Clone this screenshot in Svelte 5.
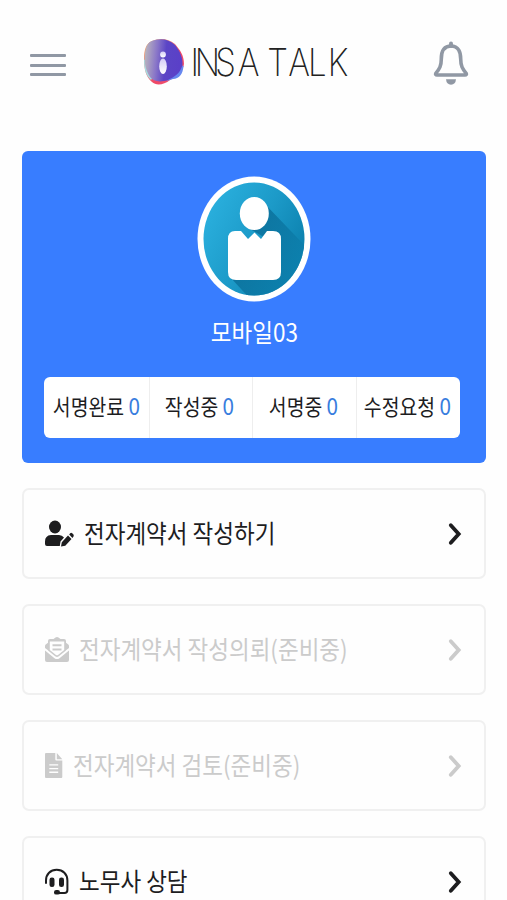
<script>
  const stats = [
    { label: '서명완료', count: 0 },
    { label: '작성중', count: 0 },
    { label: '서명중', count: 0 },
    { label: '수정요청', count: 0 }
  ]

  const menu = [
    { icon: 'edit', label: '전자계약서 작성하기', ready: true },
    { icon: 'mail', label: '전자계약서 작성의뢰(준비중)', ready: false },
    { icon: 'file', label: '전자계약서 검토(준비중)', ready: false },
    { icon: 'headset', label: '노무사 상담', ready: true }
  ]
</script>

<div class="screen">
  <header>
    <button class="menu-btn" aria-label="menu">
      <span></span>
      <span></span>
      <span></span>
    </button>

    <div class="brand">
      <svg width="42" height="48" viewBox="0 0 42 48" aria-hidden="true">
        <defs>
          <linearGradient id="blob" x1="0" y1="0.4" x2="1" y2="0.5">
            <stop offset="0" stop-color="#b9b4bd" />
            <stop offset="0.3" stop-color="#8b78c8" />
            <stop offset="0.55" stop-color="#5b45c6" />
            <stop offset="1" stop-color="#5a3fc8" />
          </linearGradient>
          <linearGradient id="rim" x1="0" y1="0" x2="1" y2="1">
            <stop offset="0" stop-color="#f6a45c" />
            <stop offset="0.3" stop-color="#ee8a7c" />
            <stop offset="0.6" stop-color="#ef4766" />
            <stop offset="1" stop-color="#ef5a78" />
          </linearGradient>
          <linearGradient id="letter" x1="0" y1="0" x2="0" y2="1">
            <stop offset="0" stop-color="#d5cdf6" />
            <stop offset="1" stop-color="#ffffff" />
          </linearGradient>
        </defs>
        <path fill="url(#rim)" d="M9 3C16 0 25 0 32 6C37 12 41 17 41 26C40 34 35 38 27 42C21 47 13 48 9 44C3 39 1 31 1 21C1 12 3 5 9 3Z" />
        <path fill="#6687ef" d="M40.500 28C40 36 36 41 30 41L24 43L34 26Z" />
        <path fill="#a9dbe0" d="M1 22C1 31 3 38 8 42L15 33L8 18Z" />
        <path fill="url(#blob)" d="M10 2.500C18 0 26 1 32 7C37 13 40 20 39.500 27C37 36 31 39 25 42C16 45 10 43 7 39C2 31 1 23 2 15C3 8 5 4 10 2.500Z" />
        <circle cx="20" cy="16.500" r="2.900" fill="url(#letter)" />
        <ellipse cx="20" cy="28.300" rx="3.800" ry="7.800" fill="url(#letter)" />
      </svg>
      <svg class="wordmark" width="166" height="54" viewBox="0 0 166 54" role="img">
        <text transform="scale(0.86 1)" y="41" x="-0.6 4.4 28.3 54.3 80 88.8 113 136 159">INSA TALK</text>
      </svg>
    </div>

    <button class="bell-btn" aria-label="notifications">
      <svg width="36" height="44" viewBox="0 0 36 44">
        <path d="M18 5C10.500 5 8.300 11 8.300 18C8.300 25 6.500 28 2.800 32.300Q2 34 4 34H32Q34 34 33.200 32.300C29.500 28 27.700 25 27.700 18C27.700 11 25.500 5 18 5Z" fill="none" stroke="#9098a4" stroke-width="3.600" stroke-linejoin="round" />
        <path d="M18 2.500V5" stroke="#9098a4" stroke-width="4" stroke-linecap="round" />
        <path d="M13 38.300H23Q22.500 43.700 18 43.700T13 38.300Z" fill="#9098a4" />
      </svg>
    </button>
  </header>

  <section class="profile">
    <svg class="avatar" width="114" height="126" viewBox="0 0 114 126" aria-hidden="true">
      <defs>
        <linearGradient id="disc" x1="0" y1="0.2" x2="1" y2="0.8">
          <stop offset="0" stop-color="#2bb1df" />
          <stop offset="0.5" stop-color="#1c9ac8" />
          <stop offset="1" stop-color="#087ba8" />
        </linearGradient>
        <linearGradient id="shade" x1="0" y1="0" x2="1" y2="0.6">
          <stop offset="0" stop-color="#075b83" />
          <stop offset="1" stop-color="#0d84b2" />
        </linearGradient>
        <clipPath id="round"><ellipse cx="57" cy="63" rx="50.500" ry="56.500" /></clipPath>
      </defs>
      <ellipse cx="57" cy="63" rx="56.500" ry="62.500" fill="#fff" />
      <ellipse cx="57" cy="63" rx="50.500" ry="56.500" fill="url(#disc)" />
      <path clip-path="url(#round)" fill="url(#shade)" opacity="0.75" d="M66 26L114 76V126H56L33 101L82 70L48 50Z" />
      <ellipse cx="57.300" cy="37.500" rx="14.500" ry="16.500" fill="#fff" />
      <path fill="#fff" d="M38 55H44L51 63L57.500 56.500L64 63L70 55H76Q84 55 84 63V96Q84 104 76 104H39Q31 104 31 96V63Q31 55 38 55Z" />
    </svg>
    <p class="name"><span>모바일03</span></p>

    <ul class="stats">
      {#each stats as s}
        <li><span>{s.label} <b>{s.count}</b></span></li>
      {/each}
    </ul>
  </section>

  <nav>
    {#each menu as item}
      <a class="row" class:disabled={!item.ready} href="#top">
        {#if item.icon === 'edit'}
          <svg width="29" height="27" viewBox="0 0 29 27">
            <ellipse cx="10" cy="7" rx="6" ry="6.500" />
            <path d="M6 15H14Q17 15 19 17.500L15.500 21.500L14.800 26H2Q0 26 0 24V21.500Q0 15.500 6 15Z" />
            <path d="M23 15.500L26.500 19.100L20.300 25.700L16 26.600L16.800 22.200ZM24.200 14.400L25.200 13.300Q26.200 12.400 27.200 13.300L28.500 14.600Q29 15.500 28.500 16.600L27.400 17.900Z" />
          </svg>
        {:else if item.icon === 'mail'}
          <svg width="24" height="27" viewBox="0 0 24 27">
            <path d="M0 14.500L9.500 22.200Q12 24 14.500 22.200L24 14.500V24Q24 26 22 26H2Q0 26 0 24Z" />
            <path d="M0 12V10Q0 9 1 8.300L3 6.800V14.300ZM24 12V10Q24 9 23 8.300L21 6.800V14.300Z" />
            <path fill-rule="evenodd" d="M8.500 3L10.500 1.500Q12 .5 13.500 1.500L15.500 3H19Q21 3 21 5V14.500L13.800 20.300Q12 21.600 10.200 20.300L3 14.500V5Q3 3 5 3ZM4.800 5.500V14L11 19Q12 19.700 13 19L19.200 14V5.500Z" />
            <path d="M7.500 8.200H16.500V10.200H7.500ZM7.500 12.600H16.500V14.600H7.500Z" />
          </svg>
        {:else if item.icon === 'file'}
          <svg width="18" height="27" viewBox="0 0 18 27">
            <path fill-rule="evenodd" d="M1 1H10.300V7.500Q10.300 8.600 11.300 8.600H17.300V25Q17.300 26 16.300 26H1Q0 26 0 25V2Q0 1 1 1ZM4.300 12.200V13.600H13.200V12.200ZM4.300 15.900V17.300H13.200V15.900ZM4.300 19.600V21H13.200V19.600Z" />
            <path d="M11.800 1L17.300 7.200H11.800Z" />
          </svg>
        {:else}
          <svg width="24" height="27" viewBox="0 0 24 27">
            <path d="M1 15V12.500C1 6 5.500 1.800 11.700 1.800S22.400 6 22.400 12.500V22Q22.400 25 19.400 25H13" fill="none" stroke="currentColor" stroke-width="2" stroke-linecap="round" />
            <rect x="4.500" y="9.500" width="5" height="9.500" rx="2.300" />
            <rect x="14" y="9.500" width="5" height="9.500" rx="2.300" />
            <rect x="9" y="22" width="6" height="4.600" rx="2.200" />
          </svg>
        {/if}
        <span class="label">{item.label}</span>
        <svg class="chevron" width="14" height="24" viewBox="0 0 14 24">
          <path d="M2.800 3.200L10.700 12L2.800 20.800" fill="none" stroke="currentColor" stroke-width="3.800" stroke-linecap="round" />
        </svg>
      </a>
    {/each}
  </nav>
</div>

<style>
  :global(body) {
    margin: 0;
    background: #fefefe;
  }

  .screen {
    box-sizing: border-box;
    height: 900px;
    overflow: hidden;
    padding: 0 21px 0 22px;
    font-family: 'Noto Sans CJK KR', sans-serif;
    color: #1d1d1f;
  }

  header {
    display: flex;
    align-items: center;
    height: 126px;
    padding: 0 17px 0 8px;
    margin-bottom: 25px;
  }

  button {
    border: 0;
    padding: 0;
    background: none;
  }

  .menu-btn {
    display: flex;
    flex-direction: column;
    gap: 6.5px;
    width: 36px;
    margin-top: 4px;
  }

  .menu-btn span {
    height: 3px;
    border-radius: 1px;
    background: #9098a4;
  }

  .brand {
    display: flex;
    align-items: center;
    gap: 6px;
    margin: -3px 0 0 77px;
  }

  .wordmark text {
    font-family: Inter, sans-serif;
    font-size: 38.5px;
    font-weight: 200;
    fill: #222;
  }

  .bell-btn {
    margin-left: auto;
  }

  .bell-btn svg {
    display: block;
  }

  .profile {
    display: flex;
    flex-direction: column;
    align-items: center;
    box-sizing: border-box;
    height: 312px;
    padding: 25px 26px 0 22px;
    border-radius: 6px;
    background: #387dff;
  }

  .avatar {
    flex: none;
    margin-left: 4px;
  }

  .name {
    margin: 11px 0 0 4px;
    line-height: 36px;
    font-size: 25px;
    color: #fff;
  }

  /* Condensed lettering */
  .name span,
  .stats span {
    display: inline-block;
    transform: scaleX(0.9);
    white-space: nowrap;
  }

  .stats {
    display: grid;
    grid-template-columns: 105px 103px 104px 1fr;
    align-self: stretch;
    height: 61px;
    margin: 28px 0 0;
    padding: 0;
    border-radius: 6px;
    background: #fff;
    list-style: none;
    font-size: 21.5px;
    line-height: 32px;
  }

  .stats li {
    display: flex;
    align-items: center;
    justify-content: center;
    box-sizing: border-box;
    min-width: 0;
    padding: 0 1px 4px 0;
  }

  .stats li + li {
    padding-right: 3px;
    border-left: 1px solid #eee;
  }

  .stats b {
    font-size: 23px;
    font-weight: 400;
    color: #387dde;
  }

  nav {
    display: flex;
    flex-direction: column;
    gap: 25px;
    margin-top: 25px;
  }

  .row {
    display: flex;
    align-items: center;
    box-sizing: border-box;
    height: 91px;
    padding: 0 22px 0 21px;
    border: 2px solid #f0f0f0;
    border-radius: 7px;
    color: inherit;
    text-decoration: none;
    fill: currentColor;
  }

  .row.disabled {
    color: #cbcbcb;
  }

  .row svg {
    flex: none;
  }

  .label {
    margin: -4px 0 0 10px;
    font-size: 25px;
    line-height: 36px;
    white-space: nowrap;
    transform: scaleX(0.9);
    transform-origin: left;
  }

  .chevron {
    margin-left: auto;
  }
</style>
